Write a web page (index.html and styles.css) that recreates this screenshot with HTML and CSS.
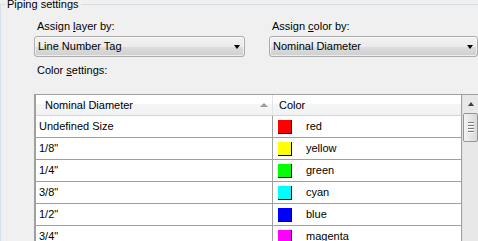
FILE: index.html
```html
<!DOCTYPE html>
<html lang="en">
<head>
    <meta charset="UTF-8">
    <title>Piping settings</title>
    <link rel="stylesheet" href="styles.css">
</head>
<body>
    <fieldset class="group">
        <legend>Piping settings</legend>
        <div class="group-body">
            <div class="selectors">
                <div class="field">
                    <label>Assign <u>l</u>ayer by:</label>
                    <div class="combo"><span>Line Number Tag</span><i class="arrow"></i></div>
                </div>
                <div class="field">
                    <label>Assign <u>c</u>olor by:</label>
                    <div class="combo"><span>Nominal Diameter</span><i class="arrow"></i></div>
                </div>
            </div>
            <label class="section-label">Color <u>s</u>ettings:</label>
            <div class="grid">
                <div class="list">
                    <div class="row head">
                        <div class="cell">Nominal Diameter<i class="sort"></i></div>
                        <div class="cell">Color</div>
                    </div>
                    <div class="row">
                        <div class="cell">Undefined Size</div>
                        <div class="cell"><span class="swatch red"></span>red</div>
                    </div>
                    <div class="row">
                        <div class="cell">1/8"</div>
                        <div class="cell"><span class="swatch yellow"></span>yellow</div>
                    </div>
                    <div class="row">
                        <div class="cell">1/4"</div>
                        <div class="cell"><span class="swatch green"></span>green</div>
                    </div>
                    <div class="row">
                        <div class="cell">3/8"</div>
                        <div class="cell"><span class="swatch cyan"></span>cyan</div>
                    </div>
                    <div class="row">
                        <div class="cell">1/2"</div>
                        <div class="cell"><span class="swatch blue"></span>blue</div>
                    </div>
                    <div class="row">
                        <div class="cell">3/4"</div>
                        <div class="cell"><span class="swatch magenta"></span>magenta</div>
                    </div>
                    <div class="row">
                        <div class="cell">1"</div>
                        <div class="cell"><span class="swatch red"></span>red</div>
                    </div>
                </div>
                <div class="scrollbar">
                    <div class="scroll-btn"><i class="up"></i></div>
                    <div class="thumb"><i></i><i></i><i></i><i></i></div>
                </div>
            </div>
        </div>
    </fieldset>
</body>
</html>
```

FILE: styles.css
```css
body {
    margin: 0;
    width: 478px;
    height: 241px;
    overflow: hidden;
    background: #f0f0f0;
    font-family: "Liberation Sans", Arial, sans-serif;
    font-size: 11px;
    line-height: 13px;
    color: #000;
}
u {
    text-decoration: underline;
    text-underline-offset: 1px;
}
.group {
    margin: -2px 0 0 0;
    padding: 0;
    min-width: 0;
    border: none;
    border-top: 1px solid #d5dfe5;
    border-left: 1px solid #d5dfe5;
}
.group legend {
    margin-left: 4px;
    padding: 0 2px;
}
.group-body {
    padding: 9px 0 0 33px;
}
.selectors {
    display: grid;
    grid-template-columns: 211px 209px;
    column-gap: 24px;
}
.field label {
    display: block;
    padding-left: 3px;
    margin-bottom: 3px;
}
.combo {
    display: flex;
    align-items: center;
    justify-content: space-between;
    height: 19px;
    padding: 0 4px 0 3px;
    border: 1px solid #acacac;
    border-radius: 3px;
    background: linear-gradient(#f2f2f2, #ebebeb 50%, #dddddd 51%, #cfcfcf);
    box-shadow: inset 0 0 0 1px rgba(255, 255, 255, 0.6);
}
.arrow {
    width: 0;
    height: 0;
    border-left: 3.5px solid transparent;
    border-right: 3.5px solid transparent;
    border-top: 4px solid #000;
    margin-top: 1px;
}
.section-label {
    display: block;
    padding-left: 3px;
    margin-top: 7px;
}
.grid {
    display: flex;
    margin-top: 17px;
    border-top: 1px solid #a0a0a0;
    border-left: 2px solid #a0a0a0;
}
.list {
    width: 426px;
    border-right: 1px solid #a0a0a0;
    background: #fff;
}
.row {
    display: grid;
    grid-template-columns: 237px 1fr;
    height: 21px;
    border-bottom: 1px solid #a0a0a0;
}
.row .cell {
    display: flex;
    align-items: center;
    padding-left: 3px;
}
.row .cell:first-child {
    border-right: 1px solid #a0a0a0;
}
.row .cell:last-child {
    padding-left: 5px;
}
.row.head {
    height: 20px;
    border-bottom: 1px solid #d5d5d5;
    background: linear-gradient(#ffffff, #ffffff 45%, #f4f5f7 46%, #f1f2f4);
}
.row.head .cell:first-child {
    padding-left: 9px;
    border-right: 1px solid #e3e6ea;
}
.row.head .cell:last-child {
    padding-left: 6px;
}
.sort {
    width: 0;
    height: 0;
    margin: 0 4px 0 auto;
    border-left: 4px solid transparent;
    border-right: 4px solid transparent;
    border-bottom: 4px solid #9a9a9a;
}
.swatch {
    width: 13px;
    height: 13px;
    margin-right: 14px;
    border-right: 1px solid #000;
    border-bottom: 1px solid #000;
}
.red { background: #ff0000; }
.yellow { background: #ffff00; }
.green { background: #00ff00; }
.cyan { background: #00ffff; }
.blue { background: #0000ff; }
.magenta { background: #ff00ff; }
.scrollbar {
    width: 15px;
    background: #e8e8e8;
    border-left: 1px solid #e0e0e0;
}
.scroll-btn {
    display: flex;
    align-items: center;
    justify-content: center;
    height: 18px;
}
.up {
    width: 0;
    height: 0;
    border-left: 3.5px solid transparent;
    border-right: 3.5px solid transparent;
    border-bottom: 4px solid #404040;
}
.thumb {
    display: flex;
    flex-direction: column;
    align-items: center;
    justify-content: center;
    gap: 1px;
    height: 27px;
    border: 1px solid #979797;
    border-radius: 2px;
    background: linear-gradient(90deg, #f4f4f4, #e6e6e6 50%, #d8d8d8);
}
.thumb i {
    width: 6px;
    height: 1px;
    background: #7a7a7a;
    border-bottom: 1px solid #fff;
}
```
